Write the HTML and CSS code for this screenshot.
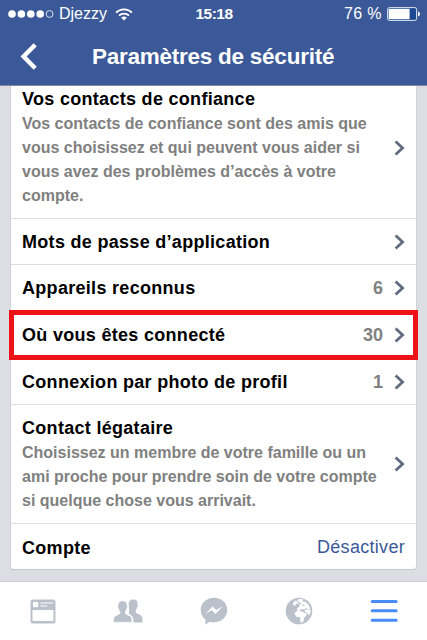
FILE: index.html
```html
<!DOCTYPE html>
<html lang="fr">
<head>
    <meta charset="UTF-8">
    <meta name="viewport" content="width=device-width, initial-scale=1.0">
    <title>Paramètres de sécurité</title>
    <link rel="stylesheet" href="styles.css">
</head>
<body>
    <header class="header">
        <div class="status-bar">
            <div class="status-left">
                <svg class="signal" width="46" height="10" viewBox="0 0 46 10">
                    <circle cx="4" cy="5" r="3.8" fill="#fff"/>
                    <circle cx="13.4" cy="5" r="3.8" fill="#fff"/>
                    <circle cx="22.8" cy="5" r="3.8" fill="#fff"/>
                    <circle cx="32.2" cy="5" r="3.8" fill="#fff"/>
                    <circle cx="41.6" cy="5" r="3.4" fill="none" stroke="#fff" stroke-width=".8"/>
                </svg>
                <span class="carrier">Djezzy</span>
                <svg class="wifi" width="18" height="13" viewBox="0 0 18 13" fill="none" stroke="#fff" stroke-width="1.8">
                    <path d="M1 4.6a11.3 11.3 0 0 1 16 0"/>
                    <path d="M4 7.7a7.1 7.1 0 0 1 10 0"/>
                    <path d="M6.2 9.8a4 4 0 0 1 5.6 0L9 12.6z" fill="#fff" stroke="none"/>
                </svg>
            </div>
            <span class="clock">15:18</span>
            <div class="status-right">
                <span class="percent">76 %</span>
                <svg class="battery" width="33" height="14" viewBox="0 0 33 14">
                    <rect x=".6" y=".6" width="29" height="12.8" rx="1.8" fill="#1c4a91" stroke="#dfe6f3" stroke-width="1"/>
                    <rect x="1.6" y="1.8" width="21" height="10.4" fill="#fff"/>
                    <path d="M31 4.6q2 .6 2 2.4t-2 2.4z" fill="#fff"/>
                </svg>
            </div>
        </div>
        <div class="nav-bar">
            <svg class="back" width="18" height="27" viewBox="0 0 18 27" fill="none" stroke="#fff" stroke-width="4.4">
                <path d="M15.2 1.7L3.6 13.5L15.2 25.3"/>
            </svg>
            <h1 class="nav-title">Paramètres de sécurité</h1>
        </div>
    </header>

    <main class="content">
        <ul class="card">
            <li class="row row-contacts">
                <div class="row-text">
                    <h2 class="row-title">Vos contacts de confiance</h2>
                    <p class="row-desc">Vos contacts de confiance sont des amis que<br>vous choisissez et qui peuvent vous aider si<br>vous avez des problèmes d’accès à votre<br>compte.</p>
                </div>
                <svg class="chevron" width="11" height="16" viewBox="0 0 11 16"><path d="M1.6 1.4L8.6 8L1.6 14.6"/></svg>
            </li>
            <li class="row">
                <h2 class="row-title">Mots de passe d’application</h2>
                <svg class="chevron" width="11" height="16" viewBox="0 0 11 16"><path d="M1.6 1.4L8.6 8L1.6 14.6"/></svg>
            </li>
            <li class="row">
                <h2 class="row-title">Appareils reconnus</h2>
                <span class="count">6</span>
                <svg class="chevron" width="11" height="16" viewBox="0 0 11 16"><path d="M1.6 1.4L8.6 8L1.6 14.6"/></svg>
            </li>
            <li class="row highlighted">
                <h2 class="row-title">Où vous êtes connecté</h2>
                <span class="count">30</span>
                <svg class="chevron" width="11" height="16" viewBox="0 0 11 16"><path d="M1.6 1.4L8.6 8L1.6 14.6"/></svg>
            </li>
            <li class="row">
                <h2 class="row-title">Connexion par photo de profil</h2>
                <span class="count">1</span>
                <svg class="chevron" width="11" height="16" viewBox="0 0 11 16"><path d="M1.6 1.4L8.6 8L1.6 14.6"/></svg>
            </li>
            <li class="row row-legacy">
                <div class="row-text">
                    <h2 class="row-title">Contact légataire</h2>
                    <p class="row-desc">Choisissez un membre de votre famille ou un<br>ami proche pour prendre soin de votre compte<br>si quelque chose vous arrivait.</p>
                </div>
                <svg class="chevron" width="11" height="16" viewBox="0 0 11 16"><path d="M1.6 1.4L8.6 8L1.6 14.6"/></svg>
            </li>
            <li class="row">
                <h2 class="row-title">Compte</h2>
                <a class="deactivate">Désactiver</a>
            </li>
        </ul>
    </main>

    <nav class="tab-bar">
        <div class="tab">
            <svg width="26" height="25" viewBox="0 0 26 25">
                <rect x=".5" y=".5" width="25" height="24" rx="2.5" fill="#bbc1cb"/>
                <rect x="3" y="3" width="5.2" height="5.2" rx=".6" fill="#fff"/>
                <path d="M10.300 4h13M10.300 7h7" stroke="#fff" stroke-width="1.200"/>
                <rect x="2.500" y="11" width="21" height="11" rx=".8" fill="#fff"/>
            </svg>
        </div>
        <div class="tab">
            <svg width="30" height="24" viewBox="0 0 30 24" fill="#bbc1cb">
                <path d="M17 15.5c-1.5-1-1.3-3-.6-4.5C15.8 9 16 7 15.8 5.5C15.5 2 17.5.5 20.500.5s4.500 2 4 5.500c.5.700.2 2-.5 2.600c-.3 1.500-.8 2.400-1.200 3v1.800c1 1.600 6.700 1.500 6.700 6.600v3.400H20.500c.2-4.500-.7-6-3.500-7.900z"/>
                <path d="M5 7C4.7 3.5 6.5 1.8 9.6 1.8s4.900 1.700 4.600 5.200c.7.600.4 2-.4 2.700c-.3 1.600-.9 2.400-1.400 3v1.500c1 2 6.600 1.700 6.600 6.300v2.900H.4v-2.900c0-4.600 5.600-4.300 6.500-6.300v-1.500c-.5-.6-1.100-1.400-1.400-3C4.700 9 4.300 7.600 5 7z" stroke="#fff" stroke-width=".8"/>
            </svg>
        </div>
        <div class="tab">
            <svg width="28" height="28" viewBox="0 0 28 28">
                <path d="M14 .8C6.500.8.700 6.200.700 13c0 3.900 1.800 7.200 4.700 9.500v5l4.600-2.800c1.300.4 2.600.5 4 .5c7.500 0 13.300-5.400 13.300-12.200S21.500.8 14 .8z" fill="#bbc1cb"/>
                <path d="M5.500 16.800l7-7.400l3.700 3.600l6.300-3.600l-7 7.500l-3.700-3.700z" fill="#fff"/>
            </svg>
        </div>
        <div class="tab">
            <svg width="28" height="28" viewBox="0 0 28 28">
                <circle cx="14" cy="14" r="13.3" fill="#bbc1cb"/>
                <path d="M8 6l2-2.200l2.500.2l1-2l4.500.3l-.4 2.200l3 .2l3 3l1.600 4l-2.600.6l-2-1.200l-1.500 1.300l-2.600-.3l-1.700 1.600l-3-.2l.5-2.600l2.200-1l-.4-2l2.400-1.300l-1.500-1l-2 1.500l-1.800-.4l-1 2l-2-.5z" fill="#fff"/>
                <path d="M9.500 16.500l1.500-2l3-.7l3.500.900l2.200 1.300h2.300l-.7 2.500l-2.300 2.500l-.4 3l-2.500 2.300l-1.100-3.700l.5-2.300l-4.200-.6z" fill="#fff"/>
                <path d="M19.500 12.800l5.800-.6l.3 2.800l-1.400 3.500l-1.600-2.200l-2.600-1.600z" fill="#fff"/>
                <path d="M12.200 4.500h2v1.500h-2zM17 7.500h2.500v1.300H17z" fill="#bbc1cb"/>
            </svg>
        </div>
        <div class="tab">
            <svg width="28" height="24" viewBox="0 0 28 24">
                <path d="M2.200 2.400h24M2.200 11.800h24M2.200 21.200h24" stroke="#4a8bfa" stroke-width="3" stroke-linecap="round"/>
            </svg>
        </div>
    </nav>
</body>
</html>
```
FILE: styles.css
```css
* {
    box-sizing: border-box;
}

body {
    margin: 0;
    height: 640px;
    display: flex;
    flex-direction: column;
    overflow: hidden;
    background-color: #dcdee3;
    font-family: "Liberation Sans", Arial, sans-serif;
}

.header {
    height: 86px;
    background-color: #3b5998;
    border-bottom: 1px solid #8288a0;
    color: white;
}

.status-bar {
    display: grid;
    grid-template-columns: 1fr auto 1fr;
    align-items: center;
    height: 28px;
    padding: 0 7px 0 8px;
    font-size: 16px;
}

.status-left,
.status-right {
    display: flex;
    align-items: center;
}

.carrier {
    margin-left: 5px;
}

.wifi {
    margin-left: 8px;
}

.clock {
    font-size: 15.5px;
    font-weight: bold;
    letter-spacing: -0.5px;
}

.status-right {
    justify-content: flex-end;
}

.percent {
    margin-right: 5px;
    letter-spacing: 0.4px;
}

.nav-bar {
    display: flex;
    align-items: center;
    height: 57px;
    padding-left: 20px;
}

.nav-title {
    margin: 0 0 0 54px;
    font-size: 22.5px;
    line-height: 57px;
    letter-spacing: -0.25px;
    white-space: nowrap;
}

.content {
    flex: 1;
    padding: 0 10px;
}

.card {
    margin: 0;
    padding: 0;
    list-style: none;
    height: 484px;
    background-color: white;
    border: 1px solid #d0d2d7;
    border-top: none;
    border-bottom-color: #c4c6cb;
    border-radius: 0 0 4px 4px;
}

.row {
    display: flex;
    align-items: center;
    height: 46.6px;
    padding: 1px 11px 0;
    border-bottom: 1px solid #dddee1;
}

.row:last-child {
    border-bottom: none;
}

.row-text {
    flex: 1;
}

.row-contacts {
    height: 132.5px;
    padding-bottom: 9px;
}

.row-legacy {
    height: 119px;
}

.row-title {
    flex: 1;
    margin: 0;
    font-size: 18px;
    line-height: 24px;
    letter-spacing: 0.3px;
    color: black;
    white-space: nowrap;
}

.row-desc {
    margin: 1px 0 0;
    font-size: 16px;
    font-weight: bold;
    line-height: 24px;
    color: #808080;
    white-space: nowrap;
}

.count {
    margin-right: 11px;
    font-size: 18px;
    line-height: 24px;
    font-weight: bold;
    color: #808080;
}

.chevron {
    flex: none;
    fill: none;
    stroke: #626b7e;
    stroke-width: 2.8;
}

.highlighted {
    margin: 0 -2px;
    padding: 1px 13px 0;
    position: relative;
}

.highlighted::after {
    content: "";
    position: absolute;
    top: -2px;
    right: 0;
    bottom: -3px;
    left: 0;
    border: 5px solid #ed1118;
}

.deactivate {
    font-size: 18px;
    letter-spacing: 0.3px;
    color: #3b5998;
}

.tab-bar {
    display: flex;
    height: 59px;
    background-color: white;
    border-top: 1px solid #cbcdd2;
}

.tab {
    flex: 1;
    display: flex;
    align-items: center;
    justify-content: center;
}
```
